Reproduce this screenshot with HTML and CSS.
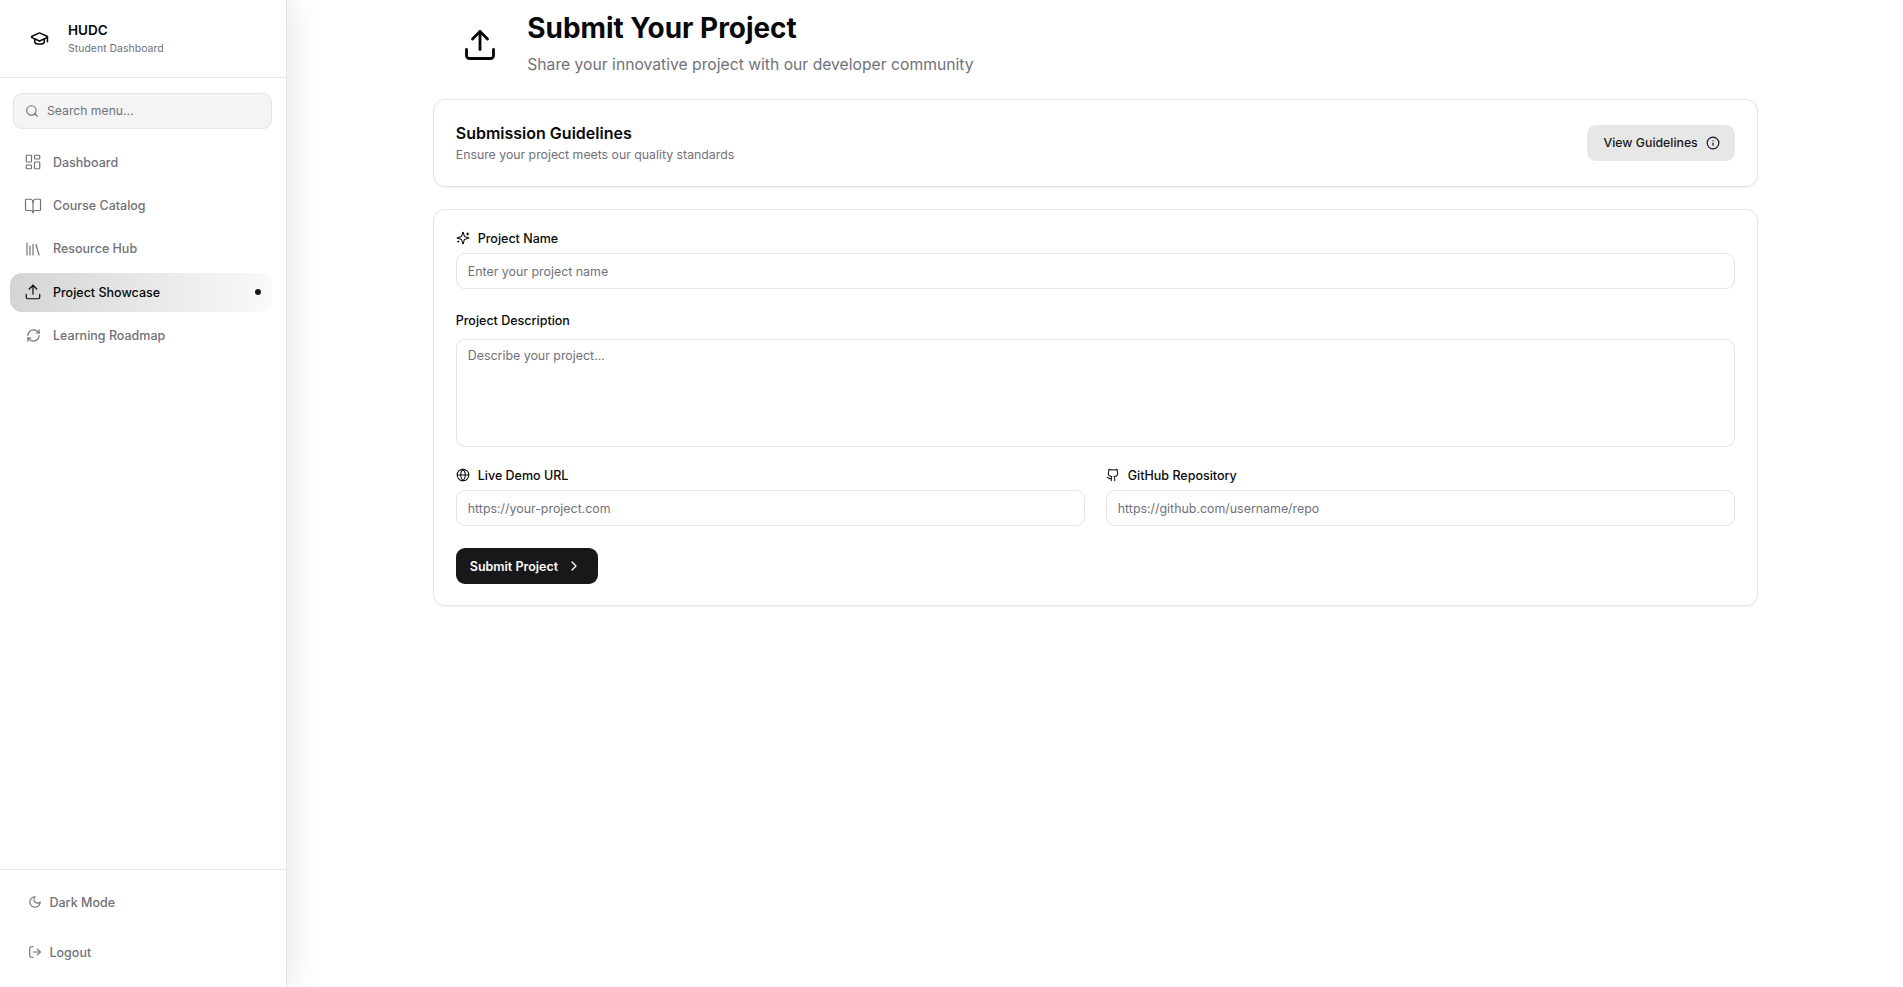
FILE: index.html
```html
<!DOCTYPE html>
<html lang="en">
<head>
    <meta charset="UTF-8">
    <meta name="viewport" content="width=device-width, initial-scale=1.0">
    <title>Submit Your Project - HUDC</title>
    <link rel="stylesheet" href="styles.css">
</head>
<body>
    <div class="layout">
        <aside class="sidebar">
            <div class="brand">
                <svg class="icon brand-icon" viewBox="0 0 24 24"><path d="M21.42 10.92a1 1 0 0 0-.02-1.84l-8.57-3.9a2 2 0 0 0-1.66 0l-8.57 3.9a1 1 0 0 0 0 1.83l8.57 3.91a2 2 0 0 0 1.66 0z"/><path d="M22 10v6"/><path d="M6 12.5V16a6 3 0 0 0 12 0v-3.5"/></svg>
                <div>
                    <div class="brand-name">HUDC</div>
                    <div class="brand-sub">Student Dashboard</div>
                </div>
            </div>

            <div class="search">
                <svg class="icon search-icon" viewBox="0 0 24 24"><circle cx="11" cy="11" r="8"/><path d="m21 21-4.3-4.3"/></svg>
                <span>Search menu...</span>
            </div>

            <nav class="nav">
                <a class="nav-item">
                    <svg class="icon nav-icon" viewBox="0 0 24 24"><rect x="3" y="3" width="7" height="9" rx="1"/><rect x="14" y="3" width="7" height="5" rx="1"/><rect x="14" y="12" width="7" height="9" rx="1"/><rect x="3" y="16" width="7" height="5" rx="1"/></svg>
                    Dashboard
                </a>
                <a class="nav-item">
                    <svg class="icon nav-icon" viewBox="0 0 24 24"><path d="M12 7v14"/><path d="M3 18a1 1 0 0 1-1-1V4a1 1 0 0 1 1-1h5a4 4 0 0 1 4 4 4 4 0 0 1 4-4h5a1 1 0 0 1 1 1v13a1 1 0 0 1-1 1h-6a3 3 0 0 0-3 3 3 3 0 0 0-3-3z"/></svg>
                    Course Catalog
                </a>
                <a class="nav-item">
                    <svg class="icon nav-icon" viewBox="0 0 24 24"><path d="m16 6 4 14"/><path d="M12 6v14"/><path d="M8 8v12"/><path d="M4 4v16"/></svg>
                    Resource Hub
                </a>
                <a class="nav-item active">
                    <svg class="icon nav-icon" viewBox="0 0 24 24"><path d="M21 15v4a2 2 0 0 1-2 2H5a2 2 0 0 1-2-2v-4"/><path d="m17 8-5-5-5 5"/><path d="M12 3v12"/></svg>
                    Project Showcase
                    <span class="nav-dot"></span>
                </a>
                <a class="nav-item">
                    <svg class="icon nav-icon nav-icon-small" viewBox="0 0 24 24"><path d="M3 12a9 9 0 0 1 9-9 9.75 9.75 0 0 1 6.74 2.74L21 8"/><path d="M21 3v5h-5"/><path d="M21 12a9 9 0 0 1-9 9 9.75 9.75 0 0 1-6.74-2.74L3 16"/><path d="M8 16H3v5"/></svg>
                    Learning Roadmap
                </a>
            </nav>

            <div class="sidebar-foot">
                <a class="foot-item">
                    <svg class="icon foot-icon" viewBox="0 0 24 24"><path d="M12 3a6 6 0 0 0 9 9 9 9 0 1 1-9-9Z"/></svg>
                    Dark Mode
                </a>
                <a class="foot-item">
                    <svg class="icon foot-icon" viewBox="0 0 24 24"><path d="M9 21H5a2 2 0 0 1-2-2V5a2 2 0 0 1 2-2h4"/><path d="m16 17 5-5-5-5"/><path d="M21 12H9"/></svg>
                    Logout
                </a>
            </div>
        </aside>

        <main class="main">
            <div class="content">
                <header class="page-head">
                    <svg class="icon page-icon" viewBox="0 0 24 24"><path d="M21 15v4a2 2 0 0 1-2 2H5a2 2 0 0 1-2-2v-4"/><path d="m17 8-5-5-5 5"/><path d="M12 3v12"/></svg>
                    <div>
                        <h1>Submit Your Project</h1>
                        <p class="page-sub">Share your innovative project with our developer community</p>
                    </div>
                </header>

                <section class="card guidelines">
                    <div class="guidelines-text">
                        <h2>Submission Guidelines</h2>
                        <p class="card-sub">Ensure your project meets our quality standards</p>
                    </div>
                    <button class="btn-light" type="button">
                        View Guidelines
                        <svg class="icon btn-icon" viewBox="0 0 24 24"><circle cx="12" cy="12" r="10"/><path d="M12 16v-4"/><path d="M12 8h.01"/></svg>
                    </button>
                </section>

                <form class="card form">
                    <div class="field">
                        <label class="label">
                            <svg class="icon label-icon" viewBox="0 0 24 24"><path d="M9.94 15.5A2 2 0 0 0 8.5 14.06l-6.14-1.58a.5.5 0 0 1 0-.96L8.5 9.94A2 2 0 0 0 9.94 8.5l1.58-6.14a.5.5 0 0 1 .96 0l1.58 6.14a2 2 0 0 0 1.44 1.44l6.14 1.58a.5.5 0 0 1 0 .96l-6.14 1.58a2 2 0 0 0-1.44 1.44l-1.58 6.14a.5.5 0 0 1-.96 0z"/><path d="M20 3v4"/><path d="M22 5h-4"/><path d="M4 17v2"/><path d="M5 18H3"/></svg>
                            Project Name
                        </label>
                        <input class="input" type="text" placeholder="Enter your project name">
                    </div>

                    <div class="field field-desc">
                        <label class="label">Project Description</label>
                        <textarea class="input textarea" placeholder="Describe your project..."></textarea>
                    </div>

                    <div class="field-row">
                        <div class="field">
                            <label class="label">
                                <svg class="icon label-icon" viewBox="0 0 24 24"><circle cx="12" cy="12" r="10"/><path d="M12 2a14.5 14.5 0 0 0 0 20 14.5 14.5 0 0 0 0-20"/><path d="M2 12h20"/></svg>
                                Live Demo URL
                            </label>
                            <input class="input" type="text" placeholder="https://your-project.com">
                        </div>
                        <div class="field">
                            <label class="label">
                                <svg class="icon label-icon" viewBox="0 0 24 24"><path d="M15 22v-4a4.8 4.8 0 0 0-1-3.5c3 0 6-2 6-5.5.08-1.25-.27-2.48-1-3.5.28-1.15.28-2.35 0-3.5 0 0-1 0-3 1.5-2.64-.5-5.36-.5-8 0C6 2 5 2 5 2c-.3 1.15-.3 2.35 0 3.5A5.4 5.4 0 0 0 4 9c0 3.5 3 5.5 6 5.5-.39.49-.68 1.05-.85 1.65-.17.6-.22 1.23-.15 1.85v4"/><path d="M9 18c-4.51 2-5-2-7-2"/></svg>
                                GitHub Repository
                            </label>
                            <input class="input" type="text" placeholder="https://github.com/username/repo">
                        </div>
                    </div>

                    <button class="btn-dark" type="button">
                        Submit Project
                        <svg class="icon btn-dark-icon" viewBox="0 0 24 24"><path d="m9 18 6-6-6-6"/></svg>
                    </button>
                </form>
            </div>
        </main>
    </div>
</body>
</html>
```

FILE: styles.css
```css
* {
    box-sizing: border-box;
}

body {
    margin: 0;
    font-family: Inter, 'Noto Sans', sans-serif;
    background: white;
    color: #09090b;
}

.icon {
    fill: none;
    stroke: currentColor;
    stroke-width: 2;
    stroke-linecap: round;
    stroke-linejoin: round;
    flex-shrink: 0;
}

.layout {
    display: flex;
    height: 100vh;
    overflow: hidden;
}

/* sidebar */
.sidebar {
    width: 287px;
    flex-shrink: 0;
    display: flex;
    flex-direction: column;
    background: white;
    border-right: 1px solid #e4e4e7;
    box-shadow: 4px 0 30px rgba(0, 0, 0, 0.1);
}

.brand {
    display: flex;
    align-items: center;
    gap: 19px;
    height: 78px;
    padding: 0 0 1px 30px;
    border-bottom: 1px solid #e4e4e7;
    color: #09090b;
}

.brand-icon {
    width: 19px;
    height: 19px;
}

.brand-name {
    font-size: 13.5px;
    font-weight: 600;
    line-height: 18px;
}

.brand-sub {
    font-size: 10.5px;
    line-height: 14px;
    margin-top: 3px;
    color: #71717a;
}

.search {
    display: flex;
    align-items: center;
    gap: 8px;
    height: 36px;
    margin: 15px 14px 0 13px;
    padding: 0 11px 1px;
    background: #f4f4f5;
    border: 1px solid #e4e4e7;
    border-radius: 9px;
    font-size: 12.2px;
    color: #71717a;
}

.search-icon {
    width: 14px;
    height: 14px;
}

.nav {
    display: flex;
    flex-direction: column;
    gap: 4px;
    margin-top: 14px;
    padding: 0 14px 0 10px;
}

.nav-item {
    display: flex;
    align-items: center;
    gap: 11px;
    height: 39.25px;
    padding: 0 14px 0.6px;
    border-radius: 12px;
    font-size: 12.5px;
    font-weight: 500;
    color: #71717a;
}

.nav-icon {
    width: 18px;
    height: 18px;
    stroke-width: 1.6;
}

.nav-icon-small {
    width: 15px;
    height: 15px;
    margin: 0 1.5px;
    stroke-width: 1.9;
}

.nav-item.active {
    background: linear-gradient(to right, #d4d4d4, #fafafa);
    color: #09090b;
}

.nav-dot {
    width: 6px;
    height: 6px;
    margin-left: auto;
    margin-right: -3px;
    background: #18181b;
    border-radius: 50%;
}

.sidebar-foot {
    margin-top: auto;
    height: 118px;
    border-top: 1px solid #e4e4e7;
    padding: 7px 0 0 28px;
}

.foot-item {
    display: flex;
    align-items: center;
    gap: 7.5px;
    height: 50px;
    font-size: 12.5px;
    font-weight: 500;
    color: #71717a;
}

.foot-icon {
    width: 14px;
    height: 14px;
}

/* main */
.main {
    flex: 1;
    min-width: 0;
    padding-left: 0.5px;
}

.content {
    width: 1325px;
    margin: 0 auto;
}

.page-head {
    display: flex;
    align-items: flex-start;
    height: 99px;
    padding: 11px 0 0 29.5px;
}

.page-icon {
    width: 36px;
    height: 36px;
    margin-top: 16px;
    margin-right: 29px;
    stroke-width: 1.9;
}

h1 {
    margin: 0;
    font-size: 27.9px;
    font-weight: 700;
    line-height: 34px;
    color: #09090b;
}

.page-sub {
    margin: 8px 0 0;
    font-size: 15.7px;
    line-height: 24px;
    color: #71717a;
}

.card {
    background: white;
    border: 1px solid #e4e4e7;
    border-radius: 12px;
    box-shadow: 0 1px 2px rgba(0, 0, 0, 0.05);
    padding: 0 22px;
}

.guidelines {
    display: flex;
    align-items: center;
    justify-content: space-between;
    height: 88px;
    margin-bottom: 22px;
}

.guidelines-text {
    padding-bottom: 2px;
}

h2 {
    margin: 0;
    font-size: 16px;
    font-weight: 600;
    line-height: 22px;
}

.card-sub {
    margin: 3px 0 0;
    font-size: 12.3px;
    line-height: 16px;
    color: #71717a;
}

.btn-light {
    display: flex;
    align-items: center;
    gap: 8px;
    height: 36px;
    padding: 0 15px 1px 16px;
    border: none;
    border-radius: 9px;
    background: #e7e7e7;
    color: #18181b;
    font: 500 12.3px Inter, sans-serif;
}

.btn-icon {
    width: 14px;
    height: 14px;
}

.form {
    display: flex;
    flex-direction: column;
    align-items: flex-start;
    height: 397px;
    padding-top: 19px;
}

.field {
    width: 100%;
    margin-bottom: 22px;
}

.label {
    display: flex;
    align-items: center;
    gap: 8px;
    height: 18px;
    margin-bottom: 6px;
    font-size: 12.5px;
    font-weight: 500;
    color: #09090b;
}

.label-icon {
    width: 14px;
    height: 14px;
    stroke-width: 1.75;
}

.field-desc {
    margin-bottom: 19px;
}

.field-desc .label {
    margin-bottom: 10px;
}

.input {
    display: block;
    width: 100%;
    height: 36px;
    padding: 0 11px;
    border: 1px solid #e4e4e7;
    border-radius: 9px;
    background: white;
    font: 400 12.4px Inter, sans-serif;
    color: #09090b;
}

.input::placeholder {
    color: #71717a;
    opacity: 1;
}

.textarea {
    height: 108px;
    padding-top: 8px;
    resize: none;
}

.field-row {
    display: grid;
    grid-template-columns: 1fr 1fr;
    gap: 21px;
    width: 100%;
}

.btn-dark {
    display: flex;
    align-items: center;
    gap: 8px;
    height: 36px;
    padding: 0 16px 0 14px;
    border: none;
    border-radius: 9px;
    background: #18181b;
    color: #fafafa;
    font: 600 12.5px Inter, sans-serif;
}

.btn-dark-icon {
    width: 16px;
    height: 16px;
}
```
